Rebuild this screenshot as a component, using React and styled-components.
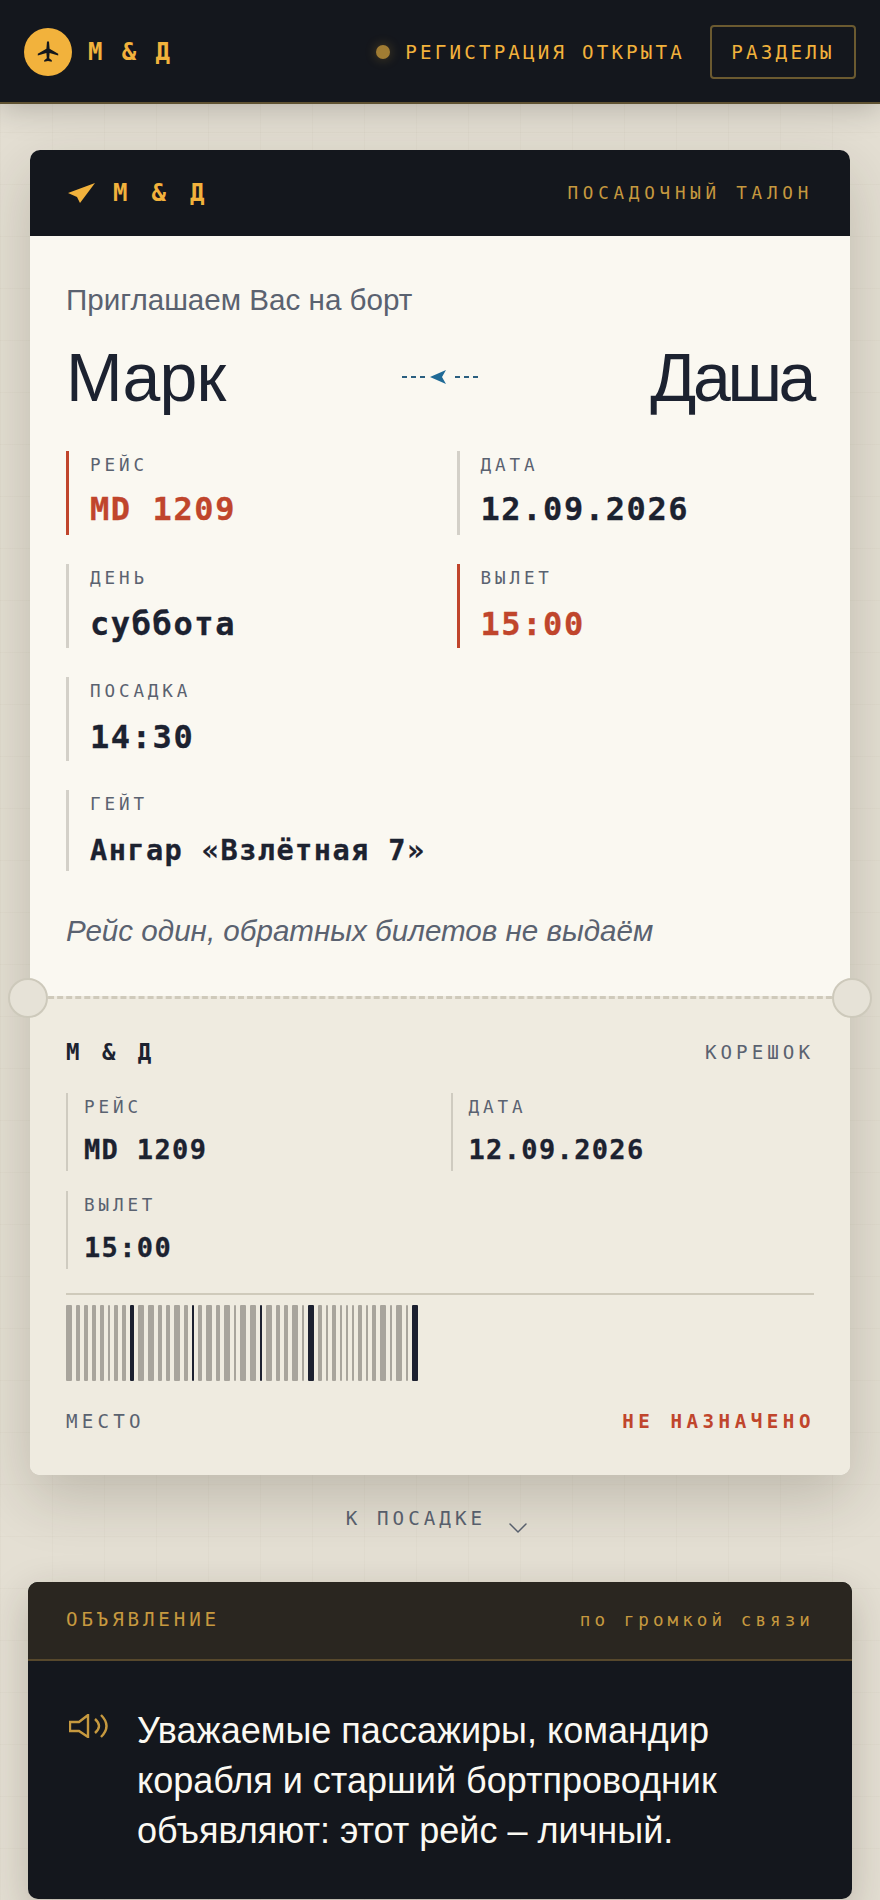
import React from 'react'
import styled, { createGlobalStyle } from 'styled-components'
import { ChevronDown } from 'lucide-react'

const ink = '#14171d'
const amber = '#f2b23c'
const dimAmber = '#c6993f'
const red = '#c0452c'
const mono = '"DejaVu Sans Mono", monospace'
const sans = '"Liberation Sans", Arial, sans-serif'

const GlobalStyle = createGlobalStyle`
  html, body { margin: 0; padding: 0; }
  body { background: #e4dfd3; font-family: ${sans}; }
`

const Page = styled.div`
  width: 880px;
  height: 1900px;
  overflow: hidden;
`

const TopBar = styled.header`
  height: 100px;
  box-sizing: content-box;
  background: ${ink};
  border-bottom: 2px solid #5f5232;
  display: flex;
  align-items: center;
  padding: 2px 24px 0;
  gap: 20px;
  box-shadow: 0 4px 30px rgba(0, 0, 0, .22);
  position: relative;
`

const LogoDisc = styled.div`
  width: 48px;
  height: 48px;
  border-radius: 50%;
  background: ${amber};
  display: flex;
  align-items: center;
  justify-content: center;
  margin-right: -4px;
`

const Brand = styled.span`
  font-family: ${mono};
  font-weight: 700;
  font-size: ${p => p.$size || 24}px;
  letter-spacing: ${p => p.$spacing || .1}em;
  color: ${p => p.$color || amber};
  white-space: pre;
`

const Status = styled.div`
  margin-left: auto;
  margin-right: 5px;
  display: flex;
  align-items: center;
  gap: 15px;
  font-family: ${mono};
  font-size: 19.2px;
  letter-spacing: .165em;
  color: ${amber};
`

const Dot = styled.span`
  width: 14px;
  height: 14px;
  border-radius: 50%;
  background: #a07c33;
  box-shadow: 0 0 12px rgba(242, 178, 60, .28);
`

const MenuButton = styled.button`
  width: 146px;
  height: 54px;
  border: 2px solid #6b5a30;
  border-radius: 4px;
  background: transparent;
  color: ${amber};
  font-family: ${mono};
  font-size: 19.2px;
  letter-spacing: .17em;
  padding: 0;
`

const Main = styled.main`
  background-color: #e4dfd3;
  background-image:
    linear-gradient(rgba(60, 50, 30, .025) 1px, transparent 1px),
    linear-gradient(90deg, rgba(60, 50, 30, .025) 1px, transparent 1px);
  background-size: 52px 52px;
  background-position: 0 28px;
  padding: 46px 30px 0;
  display: flex;
  flex-direction: column;
  height: 1796px;
  box-sizing: border-box;
`

const Ticket = styled.section`
  position: relative;
  border-radius: 10px;
  background: #faf8f1;
  box-shadow: 0 22px 60px rgba(40, 34, 20, .2);
`

const TicketHead = styled.div`
  height: 86px;
  background: ${ink};
  border-radius: 10px 10px 0 0;
  display: flex;
  align-items: center;
  justify-content: space-between;
  padding: 0 37px 0 38px;
`

const HeadBrand = styled.div`
  display: flex;
  align-items: center;
  gap: 18px;
`

const HeadLabel = styled.span`
  font-family: ${mono};
  font-size: 17.6px;
  letter-spacing: .27em;
  color: ${dimAmber};
`

const TicketBody = styled.div`
  padding: 48px 36px 0;
  height: 760px;
  box-sizing: border-box;
`

const Kicker = styled.p`
  margin: 0;
  font-size: 29.6px;
  line-height: 32px;
  color: #5a6270;
`

const Route = styled.div`
  display: grid;
  grid-template-columns: 1fr auto 1fr;
  align-items: center;
  margin: 22px 0 35px;
`

const Name = styled.h1`
  margin: 0 ${p => p.$end ? 1 : 0}px 0 0;
  font-weight: 400;
  font-size: 68px;
  line-height: 78px;
  letter-spacing: ${p => p.$end ? '-.05em' : '-.012em'};
  color: #1c2230;
  text-align: ${p => p.$end ? 'right' : 'left'};
`

const Flight = styled.div`
  display: flex;
  align-items: center;
  gap: 5px;
`

const Dash = styled.span`
  width: 23px;
  height: 2px;
  margin-left: ${p => p.$after ? 4 : 0}px;
  background: repeating-linear-gradient(90deg, #2a5f80 0 5px, transparent 5px 9px);
`

const Fields = styled.div`
  display: grid;
  grid-template-columns: 1fr 1fr;
  column-gap: ${p => p.$stub ? 21 : 33}px;
  row-gap: ${p => p.$stub ? 20 : 29}px;
`

const Field = styled.div`
  grid-column: ${p => p.$full ? '1 / -1' : 'auto'};
  border-left: ${p => p.$stub ? 2 : 3}px solid ${p => p.$hot ? red : p.$stub ? '#cfcbc0' : '#d3d0c8'};
  padding: 4px 0 0 ${p => p.$stub ? 16 : 21}px;
  height: ${p => p.$height}px;
  display: flex;
  flex-direction: column;
  gap: ${p => p.$gap}px;
  box-sizing: border-box;
`

const Label = styled.span`
  font-family: ${mono};
  font-size: 17.6px;
  line-height: 20px;
  letter-spacing: .22em;
  color: #5a6270;
`

const Value = styled.span`
  font-family: ${mono};
  font-weight: 700;
  font-size: ${p => p.$size}px;
  line-height: ${p => p.$stub ? 33 : 38}px;
  letter-spacing: .05em;
  white-space: nowrap;
  -webkit-text-stroke: .3px currentColor;
  color: ${p => p.$hot ? red : '#1c2230'};
`

const Note = styled.p`
  margin: 43px 0 0;
  font-style: italic;
  font-size: 29.6px;
  line-height: 34px;
  color: #5a6270;
`

const Tear = styled.div`
  position: relative;
  border-top: 3px dashed #cfcabb;
  background: #efebe0;
`

const Notch = styled.span`
  position: absolute;
  top: -21px;
  left: ${p => p.$right ? 'auto' : '-22px'};
  right: ${p => p.$right ? '-22px' : 'auto'};
  width: 40px;
  height: 40px;
  box-sizing: border-box;
  border-radius: 50%;
  background: #e6e2d7;
  border: 2px solid #cdc9bb;
`

const Stub = styled.div`
  background: #efebe0;
  border-radius: 0 0 10px 10px;
  padding: 38px 36px 0;
  height: 476px;
  box-sizing: border-box;
`

const StubHead = styled.div`
  display: flex;
  justify-content: space-between;
  align-items: center;
  height: 30px;
  margin-bottom: 26px;
`

const StubTag = styled.span`
  font-family: ${mono};
  font-size: 19.2px;
  letter-spacing: .21em;
  color: #5a6270;
`

const Rule = styled.div`
  height: 2px;
  background: #cfcabb;
  margin: 24px 0 10px;
`

const Barcode = styled.div`
  display: flex;
  gap: 4px;
  height: 76px;
`

const Bar = styled.span`
  width: ${p => p.$w}px;
  border-radius: 1px;
  background: ${p => p.$dark ? '#1c2030' : '#a8a49c'};
`

const SeatRow = styled.div`
  display: flex;
  justify-content: space-between;
  align-items: center;
  margin-top: 29px;
`

const SeatLabel = styled.span`
  font-family: ${mono};
  font-size: 19.2px;
  letter-spacing: .22em;
  color: #5a6270;
`

const SeatValue = styled.span`
  font-family: ${mono};
  font-weight: 700;
  font-size: 19.2px;
  letter-spacing: .235em;
  margin-right: -1px;
  color: ${red};
`

const ScrollHint = styled.div`
  display: flex;
  justify-content: center;
  align-items: flex-start;
  gap: 16px;
  height: 107px;
  padding-top: 32px;
  box-sizing: border-box;
  font-family: ${mono};
  font-size: 19.2px;
  letter-spacing: .21em;
  color: #5a6270;

  svg { margin-top: 5px; }
`

const Announcement = styled.section`
  margin: 0 -2px;
  height: 317px;
  border-radius: 10px;
  background: ${ink};
  overflow: hidden;
  box-shadow: 0 14px 40px rgba(40, 34, 20, .22);
`

const AnnounceHead = styled.div`
  height: 79px;
  background: #2a2620;
  border-bottom: 2px solid #57482c;
  box-sizing: border-box;
  display: flex;
  align-items: center;
  justify-content: space-between;
  padding: 0 38px 2px;
`

const AnnounceTag = styled.span`
  font-family: ${mono};
  font-size: 19.2px;
  letter-spacing: .2em;
  color: ${dimAmber};
`

const AnnounceNote = styled.span`
  font-family: ${mono};
  font-size: 17.6px;
  letter-spacing: .23em;
  color: ${dimAmber};
`

const AnnounceBody = styled.div`
  display: flex;
  align-items: flex-start;
  gap: 29px;
  padding: 45px 0 0 41px;
`

const Speaker = styled.svg`
  width: 39px;
  height: 24px;
  flex: none;
  margin-top: 8px;
  fill: none;
  stroke: ${dimAmber};
  stroke-width: 2.4;
`

const Speech = styled.p`
  margin: 0;
  max-width: 620px;
  font-size: 36px;
  line-height: 50px;
  color: #fbf9f2;
`

const bars = [6, 4, 4, 4, 4, 2, 4, 4, '4', 6, 6, 4, 4, 6, 4, '2', 4, 6, 4, 6, 2, 6, 6, '2', 6, 4, 4, 6, 2, '6', 4, 2, 4, 2, 2, 2, 4, 2, 4, 6, 2, 6, 2, '6']

function TicketField({ label, value, size, height, gap, hot, full, stub }) {
  return (
    <Field $hot={hot} $full={full} $stub={stub} $height={height} $gap={gap}>
      <Label>{label}</Label>
      <Value $size={size} $hot={hot} $stub={stub}>{value}</Value>
    </Field>
  )
}

export default function App() {
  return (
    <Page>
      <GlobalStyle />
      <TopBar>
        <LogoDisc>
          <svg width="24" height="24" viewBox="0 0 24 24" fill={ink}>
            <path d="M11 1.5h2l.6 7.2 8.6 5v1.8l-8.6-2.4-.4 5.2 2.6 2v1.5L12 21l-3.800.8v-1.500l2.600-2-.4-5.200-8.600 2.400v-1.800l8.600-5z" />
          </svg>
        </LogoDisc>
        <Brand>М & Д</Brand>
        <Status>
          <Dot />
          РЕГИСТРАЦИЯ ОТКРЫТА
        </Status>
        <MenuButton>РАЗДЕЛЫ</MenuButton>
      </TopBar>
      <Main>
        <Ticket>
          <TicketHead>
            <HeadBrand>
              <svg width="27" height="21" viewBox="0 0 27 21" fill={amber}>
                <path d="M0 10 27 0 12 20 9 14z" />
              </svg>
              <Brand $spacing={.2}>М & Д</Brand>
            </HeadBrand>
            <HeadLabel>ПОСАДОЧНЫЙ ТАЛОН</HeadLabel>
          </TicketHead>
          <TicketBody>
            <Kicker>Приглашаем Вас на борт</Kicker>
            <Route>
              <Name>Марк</Name>
              <Flight>
                <Dash />
                <svg width="16" height="14" viewBox="0 0 16 14" fill="#1f6a96">
                  <path d="M0 7 16 0 12 7 16 14z" />
                </svg>
                <Dash $after />
              </Flight>
              <Name $end>Даша</Name>
            </Route>
            <Fields>
              <TicketField label="РЕЙС" value="MD 1209" size={32} height={84} gap={15} hot />
              <TicketField label="ДАТА" value="12.09.2026" size={32} height={84} gap={15} />
              <TicketField label="ДЕНЬ" value="суббота" size={32} height={84} gap={17} />
              <TicketField label="ВЫЛЕТ" value="15:00" size={32} height={84} gap={17} hot />
              <TicketField label="ПОСАДКА" value="14:30" size={32} height={84} gap={17} full />
              <TicketField label="ГЕЙТ" value="Ангар «Взлётная 7»" size={28.6} height={81} gap={17} full />
            </Fields>
            <Note>Рейс один, обратных билетов не выдаём</Note>
          </TicketBody>
          <Tear>
            <Notch />
            <Notch $right />
          </Tear>
          <Stub>
            <StubHead>
              <Brand $size={22.4} $spacing={.2} $color="#1c2230">М & Д</Brand>
              <StubTag>КОРЕШОК</StubTag>
            </StubHead>
            <Fields $stub>
              <TicketField label="РЕЙС" value="MD 1209" size={27} height={78} gap={16} stub />
              <TicketField label="ДАТА" value="12.09.2026" size={27} height={78} gap={16} stub />
              <TicketField label="ВЫЛЕТ" value="15:00" size={27} height={78} gap={16} stub full />
            </Fields>
            <Rule />
            <Barcode>
              {bars.map((b, i) => <Bar key={i} $w={Number(b)} $dark={typeof b === 'string'} />)}
            </Barcode>
            <SeatRow>
              <SeatLabel>МЕСТО</SeatLabel>
              <SeatValue>НЕ НАЗНАЧЕНО</SeatValue>
            </SeatRow>
          </Stub>
        </Ticket>
        <ScrollHint>
          К ПОСАДКЕ
          <ChevronDown size={32} strokeWidth={1.1} color="#5a6270" />
        </ScrollHint>
        <Announcement>
          <AnnounceHead>
            <AnnounceTag>ОБЪЯВЛЕНИЕ</AnnounceTag>
            <AnnounceNote>по громкой связи</AnnounceNote>
          </AnnounceHead>
          <AnnounceBody>
            <Speaker viewBox="0 0 39 24">
              <path d="M1 8h9l9-7v22l-9-6H1z" />
              <path d="M26 5q8 7 0 14" />
              <path d="M32 1q11 11 0 22" />
            </Speaker>
            <Speech>Уважаемые пассажиры, командир корабля и старший бортпроводник объявляют: этот рейс – личный.</Speech>
          </AnnounceBody>
        </Announcement>
      </Main>
    </Page>
  )
}
